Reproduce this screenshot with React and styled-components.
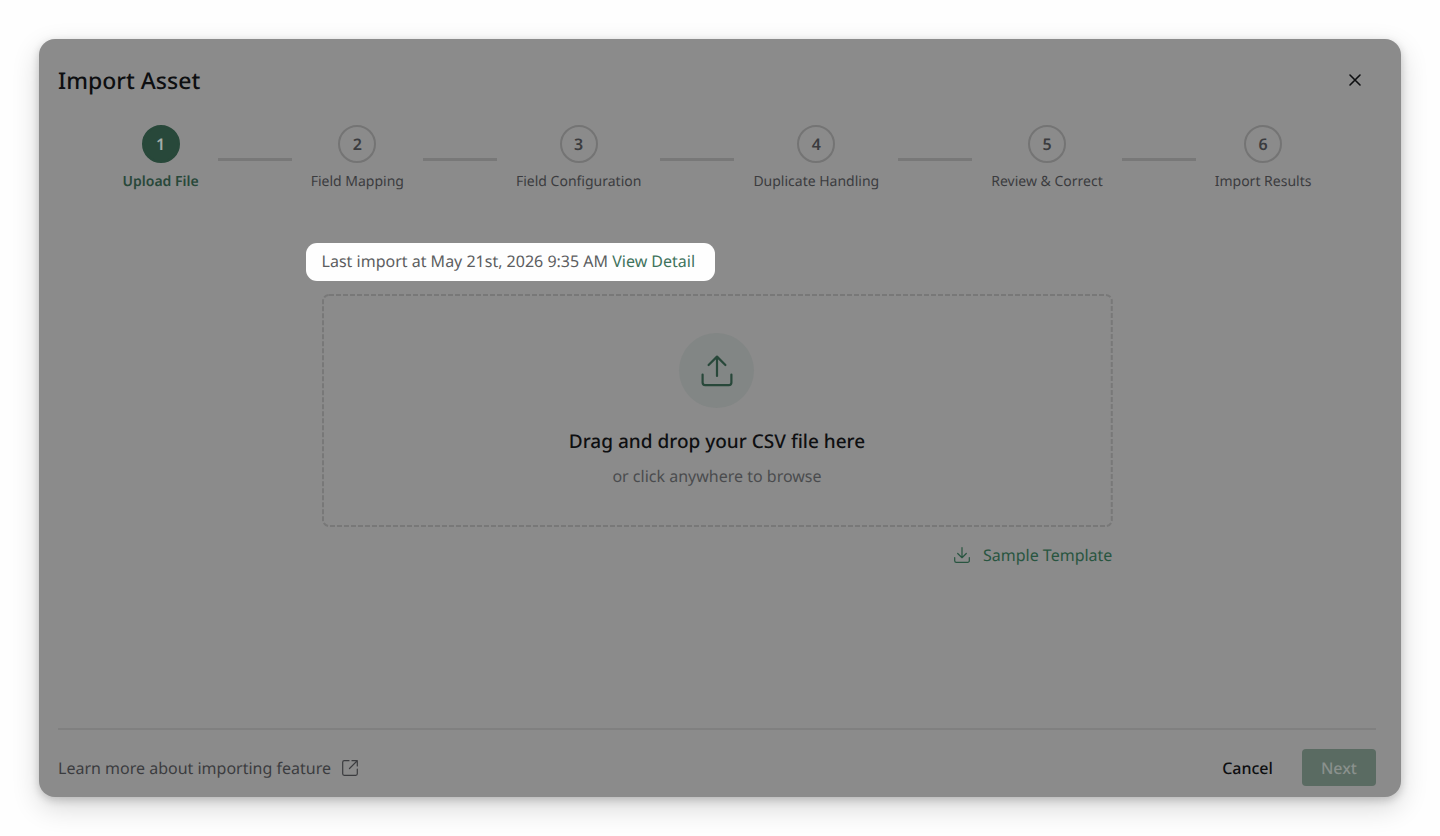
import { Fragment } from "react";
import styled, { createGlobalStyle } from "styled-components";

const GlobalStyle = createGlobalStyle`
  *, *::before, *::after {
    box-sizing: border-box;
  }

  body {
    margin: 0;
    background-color: #fefefe;
    font-family: "Noto Sans", sans-serif;
    font-size: 16px;
    line-height: 24px;
    color: #3b3c3f;
    text-rendering: geometricPrecision;
  }

  h1, h2, p, ol {
    margin: 0;
    padding: 0;
  }

  button {
    font: inherit;
    color: inherit;
    border: none;
    background: none;
    padding: 0;
    cursor: pointer;
    text-rendering: inherit;
  }

  a {
    color: inherit;
    text-decoration: none;
  }
`;

const Page = styled.div`
  display: flex;
  min-height: 100vh;
  padding: 39px;
`;

const Dialog = styled.section`
  display: flex;
  flex: 1;
  flex-direction: column;
  padding: 20px 25px 11px 19px;
  border-radius: 16px;
  background-color: #8b8b8b;
  box-shadow: 0 10px 28px rgba(0, 0, 0, 0.16), 0 3px 8px rgba(0, 0, 0, 0.18);
`;

const Header = styled.header`
  display: flex;
  align-items: center;
  justify-content: space-between;
  height: 42px;
`;

const Title = styled.h1`
  font-size: 23px;
  line-height: 32px;
  font-weight: 500;
  color: #0e0f11;
`;

const CloseButton = styled.button`
  display: flex;
  align-items: center;
  justify-content: center;
  width: 42px;
  height: 42px;
  color: #0e0f11;
`;

const StepList = styled.ol`
  display: flex;
  align-items: center;
  justify-content: center;
  gap: 19px;
  margin-top: 24px;
  list-style: none;
`;

const StepItem = styled.li`
  display: flex;
  flex-direction: column;
  align-items: center;
  gap: 8px;
`;

const StepNumber = styled.span`
  display: flex;
  align-items: center;
  justify-content: center;
  width: 38px;
  height: 38px;
  border: 2px solid ${({ $active }) => ($active ? "#28483a" : "#747474")};
  border-radius: 50%;
  background-color: ${({ $active }) => ($active ? "#28483a" : "transparent")};
  color: ${({ $active }) => ($active ? "#a3aca7" : "#3b3c3f")};
  font-size: 16px;
  font-weight: 600;
`;

const StepLabel = styled.span`
  font-size: 14px;
  line-height: 22px;
  font-weight: ${({ $active }) => ($active ? 600 : 400)};
  color: ${({ $active }) => ($active ? "#28483a" : "#3b3c3f")};
`;

const Connector = styled.li`
  width: 74px;
  height: 3px;
  background-color: #787878;
`;

const Main = styled.main`
  display: flex;
  flex: 1;
  flex-direction: column;
  align-items: flex-start;
  width: 60%;
  margin: 50px auto 0;
`;

const LastImport = styled.p`
  margin: 0 -16px 13px;
  padding: 6px 20px 8px 16px;
  border-radius: 11px;
  background-color: #fefefe;
  color: #5c5d60;
`;

const DetailLink = styled.a`
  color: #40735c;
`;

const DropZone = styled.button`
  position: relative;
  display: flex;
  flex-direction: column;
  align-items: center;
  width: 100%;
  padding: 39px 20px;
`;

const DashedOutline = styled.svg`
  position: absolute;
  inset: 0;
  width: 100%;
  height: 100%;
  padding: 1px;
  overflow: visible;
  fill: none;
  stroke: #787878;
  stroke-width: 2;
  stroke-dasharray: 5 2;
  pointer-events: none;
`;

const UploadBadge = styled.span`
  display: flex;
  align-items: center;
  justify-content: center;
  width: 75px;
  height: 75px;
  border-radius: 50%;
  background-color: #828685;
  color: #28483a;
`;

const DropTitle = styled.span`
  margin-top: 20px;
  font-size: 19px;
  line-height: 26px;
  font-weight: 500;
  color: #0e0f11;
`;

const DropHint = styled.span`
  margin-top: 10px;
  color: #4a4b4e;
`;

const TemplateLink = styled.a`
  display: flex;
  align-items: center;
  align-self: flex-end;
  gap: 12px;
  margin-top: 16px;
  color: #285540;
`;

const Footer = styled.footer`
  display: flex;
  align-items: center;
  justify-content: space-between;
  padding-top: 19px;
  border-top: 2px solid #808080;
`;

const HelpLink = styled.a`
  display: flex;
  align-items: center;
  gap: 10px;
`;

const Actions = styled.div`
  display: flex;
  gap: 10px;
`;

const Button = styled.button`
  height: 37px;
  padding: 0 19px;
  border-radius: 4px;
  font-weight: 500;
  color: ${({ $primary }) => ($primary ? "#8a918d" : "#0e0f11")};
  background-color: ${({ $primary }) => ($primary ? "#5a6b62" : "transparent")};
`;

const Icon = styled.svg`
  display: block;
  fill: none;
  stroke: currentColor;
  stroke-linecap: round;
  stroke-linejoin: round;
`;

const steps = [
  "Upload File",
  "Field Mapping",
  "Field Configuration",
  "Duplicate Handling",
  "Review & Correct",
  "Import Results",
];

function Stepper({ current }) {
  return (
    <StepList>
      {steps.map((label, i) => (
        <Fragment key={label}>
          {i > 0 && <Connector aria-hidden="true" />}
          <StepItem aria-current={i + 1 === current ? "step" : undefined}>
            <StepNumber $active={i + 1 === current}>{i + 1}</StepNumber>
            <StepLabel $active={i + 1 === current}>{label}</StepLabel>
          </StepItem>
        </Fragment>
      ))}
    </StepList>
  );
}

function App() {
  return (
    <>
      <GlobalStyle />
      <Page>
        <Dialog role="dialog" aria-labelledby="import-title">
          <Header>
            <Title id="import-title">Import Asset</Title>
            <CloseButton type="button" aria-label="Close">
              <Icon width="14" height="14" viewBox="0 0 14 14" strokeWidth="1.6">
                <path d="M2 2l10 10M12 2L2 12" />
              </Icon>
            </CloseButton>
          </Header>

          <Stepper current={1} />

          <Main>
            <LastImport>
              Last import at May 21st, 2026 9:35 AM{" "}
              <DetailLink href="#detail">View Detail</DetailLink>
            </LastImport>
            <DropZone type="button">
              <DashedOutline aria-hidden="true">
                <rect width="100%" height="100%" rx="6" />
              </DashedOutline>
              <UploadBadge>
                <Icon width="34" height="34" viewBox="0 0 34 34" strokeWidth="2.2">
                  <path d="M17 22V2.8M8.6 11L17 2.6 25.4 11M2.6 20.5v8a2.6 2.6 0 0 0 2.6 2.6h23.6a2.6 2.6 0 0 0 2.6-2.6v-8" />
                </Icon>
              </UploadBadge>
              <DropTitle>Drag and drop your CSV file here</DropTitle>
              <DropHint>or click anywhere to browse</DropHint>
            </DropZone>
            <TemplateLink href="#template">
              <Icon width="18" height="18" viewBox="0 0 18 18" strokeWidth="1.2">
                <path d="M9 1.5v10M4.7 7.5L9 11.7l4.3-4.2M1.7 11.5v3.2a1.7 1.7 0 0 0 1.7 1.7h11.2a1.7 1.7 0 0 0 1.7-1.7v-3.2" />
              </Icon>
              Sample Template
            </TemplateLink>
          </Main>

          <Footer>
            <HelpLink href="#help">
              Learn more about importing feature
              <Icon width="18" height="18" viewBox="0 0 18 18" strokeWidth="1.2">
                <path d="M8 1.7H3.2a1.5 1.5 0 0 0-1.5 1.5v11.6a1.5 1.5 0 0 0 1.5 1.5h11.6a1.5 1.5 0 0 0 1.5-1.5V10M11 1.7h5.3V7M16.3 1.7L8.5 9.5" />
              </Icon>
            </HelpLink>
            <Actions>
              <Button type="button">Cancel</Button>
              <Button type="button" $primary disabled>
                Next
              </Button>
            </Actions>
          </Footer>
        </Dialog>
      </Page>
    </>
  );
}

export default App;
